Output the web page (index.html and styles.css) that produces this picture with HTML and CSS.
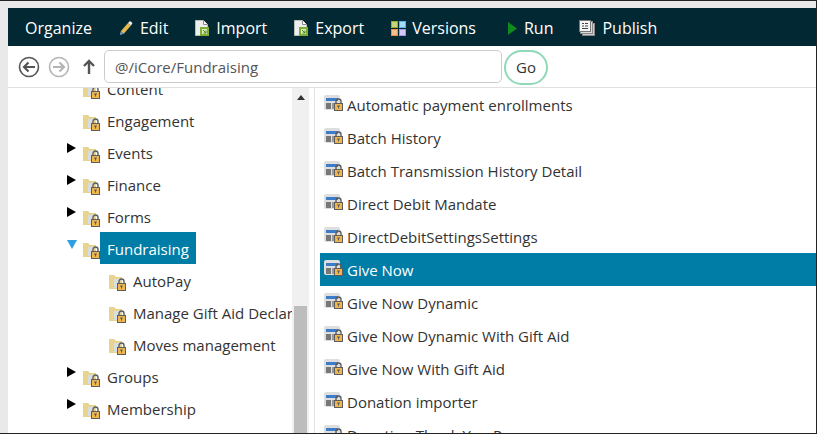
FILE: index.html
```html
<!Doctype html>
<html>
    <head>
        <title>Fundraising</title>
        <link rel="stylesheet" href="styles.css">
    </head>
    <body>
        <svg class="defs" width="0" height="0">
            <symbol id="lock" viewBox="0 0 9 13">
                <path d="M2 6V3.500a2.500 2.500 0 0 1 5 0V6" fill="none" stroke="#5c5c5c" stroke-width="1.400"/>
                <rect x="0.500" y="5.500" width="8" height="7" fill="#efb64f" stroke="#5c5c5c"/>
                <path d="M3 8h3M4.500 8v2.500" stroke="#5c5c5c"/>
            </symbol>
            <symbol id="folder-lock" viewBox="0 0 17 17">
                <path d="M0 1h5l2 2h6v12H0z" fill="#e8d48f"/>
                <rect x="5" y="5" width="6" height="9" fill="#d8dde2"/>
                <use href="#lock" x="8" y="4" width="9" height="13"/>
            </symbol>
            <symbol id="page-lock" viewBox="0 0 20 16">
                <rect x="0" y="0" width="16" height="15" rx="2" fill="#dedede"/>
                <rect x="2" y="3" width="12" height="3" fill="#3d7cc9"/>
                <rect x="2" y="8" width="5" height="6" fill="#777"/>
                <rect x="8" y="8" width="5" height="6" fill="#999"/>
                <use href="#lock" x="10" y="3" width="9" height="13"/>
            </symbol>
            <symbol id="doc" viewBox="0 0 14 16">
                <path d="M0.500 0.500h8l4 4v11h-12z" fill="#eee" stroke="#bbb"/>
                <path d="M8.500 0.500v4h4" fill="#fff" stroke="#888"/>
                <rect x="5" y="7" width="9" height="9" fill="#7fae34"/>
                <rect x="7" y="9" width="5" height="5" fill="#dbe9c0"/>
                <path d="M8 10l3 3M11 10.500V13H8.500" fill="none" stroke="#4d8a1c"/>
            </symbol>
        </svg>

        <div class="frame">
            <!-- Toolbar -->
            <div class="toolbar">
                <span class="tool">Organize</span>
                <span class="tool">
                    <svg width="14" height="16" viewBox="0 0 14 16">
                        <path d="M1 15l1-4 7-8 3 2.500-7 8z" fill="#e5b94e"/>
                        <path d="M1 15l1-4 3 2.500z" fill="#5a8fd0"/>
                        <path d="M9 3l2-2 2.500 2-1.500 2.500z" fill="#eee"/>
                    </svg>
                    Edit
                </span>
                <span class="tool">
                    <svg width="14" height="16"><use href="#doc"/></svg>
                    Import
                </span>
                <span class="tool">
                    <svg width="14" height="16"><use href="#doc"/></svg>
                    Export
                </span>
                <span class="tool tool-versions">
                    <svg width="15" height="15" viewBox="0 0 15 15">
                        <rect x="0.500" y="0.500" width="6" height="6" fill="#c5d67a" stroke="#98ac2c"/>
                        <rect x="8.500" y="0.500" width="6" height="6" fill="#a6d8f8" stroke="#5fb0ec"/>
                        <rect x="0.500" y="8.500" width="6" height="6" fill="#f8bc90" stroke="#f08a48"/>
                        <rect x="8.500" y="8.500" width="6" height="6" fill="#d6c8f6" stroke="#ab92e8"/>
                    </svg>
                    Versions
                </span>
                <span class="tool tool-run">
                    <svg width="9" height="13" viewBox="0 0 9 13"><path d="M0 0l9 6.500-9 6.500z" fill="#0f8a1f"/></svg>
                    Run
                </span>
                <span class="tool tool-publish">
                    <svg width="16" height="16" viewBox="0 0 16 16">
                        <rect x="3.500" y="3.500" width="12" height="12" fill="#ccc" stroke="#888"/>
                        <rect x="1.500" y="1.500" width="12" height="12" fill="#ddd" stroke="#888"/>
                        <rect x="0.500" y="0.500" width="11" height="11" fill="#f4f4f4" stroke="#777"/>
                        <path d="M3 3.500h2M6 3.500h3M3 6h2M6 6h3M3 8.500h6" stroke="#444"/>
                    </svg>
                    Publish
                </span>
            </div>

            <!-- Address bar -->
            <div class="address">
                <svg class="nav" width="22" height="22" viewBox="0 0 22 22">
                    <circle cx="11" cy="11" r="9.500" fill="none" stroke="#555" stroke-width="1.600"/>
                    <path d="M17 11H6M10.500 6.500L6 11l4.500 4.500" fill="none" stroke="#555" stroke-width="2.200"/>
                </svg>
                <svg class="nav" width="22" height="22" viewBox="0 0 22 22">
                    <circle cx="11" cy="11" r="9.500" fill="none" stroke="#b5b5b5" stroke-width="1.600"/>
                    <path d="M5 11h11M11.500 6.500L16 11l-4.500 4.500" fill="none" stroke="#b5b5b5" stroke-width="2.200"/>
                </svg>
                <svg class="nav nav-up" width="12" height="15" viewBox="0 0 12 15">
                    <path d="M6 15V2M1 7l5-5 5 5" fill="none" stroke="#555" stroke-width="2.400"/>
                </svg>
                <div class="path-input">@/iCore/Fundraising</div>
                <div class="go">Go</div>
            </div>

            <div class="panels">
                <!-- Tree -->
                <div class="tree">
                    <div class="tree-inner">
                        <div class="node"><svg class="folder"><use href="#folder-lock"/></svg><span class="label">Content</span></div>
                        <div class="node"><svg class="folder"><use href="#folder-lock"/></svg><span class="label">Engagement</span></div>
                        <div class="node"><i class="arrow"></i><svg class="folder"><use href="#folder-lock"/></svg><span class="label">Events</span></div>
                        <div class="node"><i class="arrow"></i><svg class="folder"><use href="#folder-lock"/></svg><span class="label">Finance</span></div>
                        <div class="node"><i class="arrow"></i><svg class="folder"><use href="#folder-lock"/></svg><span class="label">Forms</span></div>
                        <div class="node"><i class="arrow arrow-open"></i><svg class="folder"><use href="#folder-lock"/></svg><span class="label label-on">Fundraising</span></div>
                        <div class="node child"><svg class="folder"><use href="#folder-lock"/></svg><span class="label">AutoPay</span></div>
                        <div class="node child"><svg class="folder"><use href="#folder-lock"/></svg><span class="label">Manage Gift Aid Declarations</span></div>
                        <div class="node child"><svg class="folder"><use href="#folder-lock"/></svg><span class="label">Moves management</span></div>
                        <div class="node"><i class="arrow"></i><svg class="folder"><use href="#folder-lock"/></svg><span class="label">Groups</span></div>
                        <div class="node"><i class="arrow"></i><svg class="folder"><use href="#folder-lock"/></svg><span class="label">Membership</span></div>
                    </div>
                </div>

                <div class="scrollbar">
                    <i class="scroll-up"></i>
                    <div class="scroll-thumb"></div>
                </div>

                <!-- Document list -->
                <div class="list">
                    <div class="row"><svg class="page"><use href="#page-lock"/></svg>Automatic payment enrollments</div>
                    <div class="row"><svg class="page"><use href="#page-lock"/></svg>Batch History</div>
                    <div class="row"><svg class="page"><use href="#page-lock"/></svg>Batch Transmission History Detail</div>
                    <div class="row"><svg class="page"><use href="#page-lock"/></svg>Direct Debit Mandate</div>
                    <div class="row"><svg class="page"><use href="#page-lock"/></svg>DirectDebitSettingsSettings</div>
                    <div class="row row-on"><svg class="page"><use href="#page-lock"/></svg>Give Now</div>
                    <div class="row"><svg class="page"><use href="#page-lock"/></svg>Give Now Dynamic</div>
                    <div class="row"><svg class="page"><use href="#page-lock"/></svg>Give Now Dynamic With Gift Aid</div>
                    <div class="row"><svg class="page"><use href="#page-lock"/></svg>Give Now With Gift Aid</div>
                    <div class="row"><svg class="page"><use href="#page-lock"/></svg>Donation importer</div>
                    <div class="row"><svg class="page"><use href="#page-lock"/></svg>Donation Thank You Page</div>
                </div>
            </div>
        </div>
    </body>
</html>
```

FILE: styles.css
```css
/* Window */
html, body {
    margin: 0;
    height: 100%;
    overflow: hidden;
}

body {
    font-family: "Open Sans", sans-serif;
    color: #333;
    background: #e9e9e9;
}

.defs {
    position: absolute;
}

.frame {
    box-sizing: border-box;
    height: 434px;
    padding: 8px 0 0 8px;
    border-top: 1px solid #222;
    border-right: 1px solid #222;
    border-bottom: 1px solid #222;
    display: flex;
    flex-direction: column;
}

/* Toolbar */
.toolbar {
    box-sizing: border-box;
    margin-top: -1px;
    height: 38px;
    flex: none;
    background: #022833;
    color: #fff;
    font-size: 16px;
    padding: 2px 0 0 17px;
    display: flex;
    align-items: center;
    gap: 27px;
}

.tool {
    display: flex;
    align-items: center;
    gap: 7px;
}

.tool-versions {
    gap: 6px;
}

.tool-run {
    margin-left: 5px;
}

.tool-publish {
    margin-left: -1px;
}

/* Address bar */
.address {
    height: 41px;
    flex: none;
    background: #fff;
    border-bottom: 1px solid #e0e0e0;
    padding-left: 10px;
    display: flex;
    align-items: center;
}

.nav {
    margin-right: 8px;
}

.nav-up {
    margin-left: 5px;
    margin-right: 9px;
}

.path-input {
    box-sizing: border-box;
    width: 398px;
    height: 33px;
    border: 1px solid #ccc;
    border-radius: 5px;
    padding-left: 10px;
    font-size: 15px;
    line-height: 33px;
    color: #555;
}

.go {
    box-sizing: border-box;
    width: 44px;
    height: 35px;
    margin: 2px 0 0 2px;
    border: 2px solid #8fd8b8;
    border-radius: 18px;
    font-size: 15px;
    line-height: 31px;
    text-align: center;
}

/* Panels */
.panels {
    flex: 1;
    min-height: 0;
    background: #fff;
    display: flex;
    overflow: hidden;
}

.tree {
    width: 284px;
    flex: none;
    overflow: hidden;
}

.tree-inner {
    margin-top: -16px;
}

.node {
    height: 32px;
    padding-left: 75px;
    display: flex;
    align-items: center;
    position: relative;
    font-size: 15px;
    white-space: nowrap;
}

.node.child {
    padding-left: 101px;
}

.folder {
    width: 17px;
    height: 17px;
    flex: none;
    margin-top: 5px;
}

.label {
    padding: 2px 7px 0;
    line-height: 30px;
}

.label-on {
    background: #007da6;
    color: #fff;
}

.arrow {
    position: absolute;
    left: 59px;
    top: 7px;
    border-left: 9px solid #000;
    border-top: 5px solid transparent;
    border-bottom: 5px solid transparent;
}

.arrow-open {
    top: 8px;
    border-top: 9px solid #2e9fe0;
    border-left: 5px solid transparent;
    border-right: 5px solid transparent;
    border-bottom: 0;
}

/* Scrollbar */
.scrollbar {
    width: 17px;
    flex: none;
    background: #f0f0f0;
    display: flex;
    flex-direction: column;
    align-items: center;
}

.scroll-up {
    margin-top: 7px;
    border-bottom: 5px solid #333;
    border-left: 4px solid transparent;
    border-right: 4px solid transparent;
}

.scroll-thumb {
    width: 13px;
    flex: 1;
    margin-top: 206px;
    background: #bdbdbd;
}

/* List */
.list {
    flex: 1;
    min-width: 0;
    margin-left: 5px;
    border-left: 1px solid #e3e3e3;
    padding: 0 0 0 5px;
    overflow: hidden;
}

.row {
    height: 33px;
    padding-left: 4px;
    display: flex;
    align-items: center;
    gap: 3px;
    font-size: 15px;
    white-space: nowrap;
}

.page {
    width: 20px;
    height: 16px;
    flex: none;
    margin-top: -3px;
}

.row-on {
    background: #007da6;
    color: #fff;
}
```
